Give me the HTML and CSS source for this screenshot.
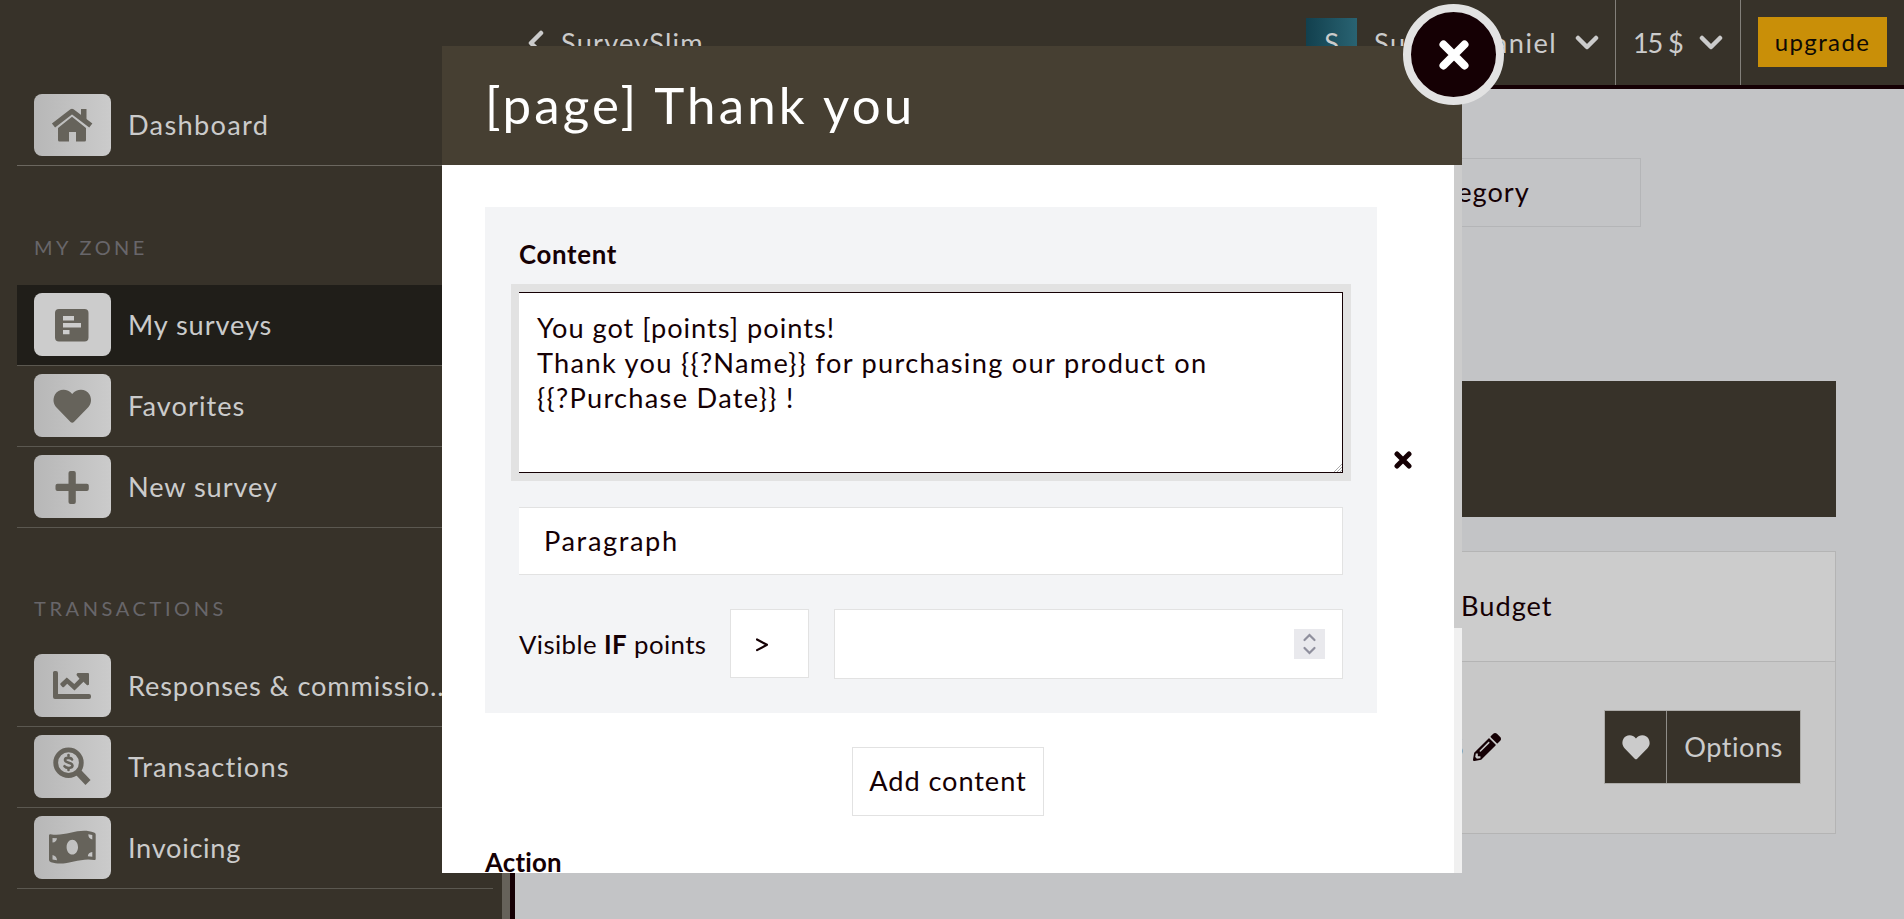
FILE: index.html
```html
<!DOCTYPE html>
<html lang="en">
<head>
<meta charset="utf-8">
<title>SurveySlim</title>
<link rel="stylesheet" href="styles.css">
</head>
<body>
<div class="app">
  <header class="topbar">
    <a class="crumb"><svg class="crumb-arrow" viewBox="0 0 16 26"><path d="M13 3 3 13l10 10"/></svg><span class="t-crumb">SurveySlim</span></a>
    <div class="account">
      <span class="avatar">S</span><span class="t-user">Survey Daniel</span>
      <svg class="chev" viewBox="0 0 24 15"><path d="m3 3 9 9 9-9"/></svg>
    </div>
    <div class="balance"><span class="t-balance">15 $</span><svg class="chev" viewBox="0 0 24 15"><path d="m3 3 9 9 9-9"/></svg></div>
    <div class="upgrade-wrap"><button class="upgrade">upgrade</button></div>
  </header>

  <div class="columns">
    <nav class="sidebar">
      <a class="item"><svg class="tile" viewBox="0 0 77 62"><path class="ln" stroke-width="5.2" stroke-linejoin="round" d="M19.5 31.5 38 17.3l18.8 14.2"/><path d="M47 15h5.5v13L47 24zM38 22.8 52 34v12a1.5 1.5 0 0 1-1.500 1.500H42V38h-7v9.500H25.500A1.500 1.500 0 0 1 24 46V34z"/></svg><span class="t-dash">Dashboard</span></a>
      <h2 class="group">MY ZONE</h2>
      <a class="item active"><svg class="tile" viewBox="0 0 77 63"><path fill-rule="evenodd" d="M25 16h25.500a4 4 0 0 1 4 4v24.500a4 4 0 0 1-4 4H25a4 4 0 0 1-4-4V20a4 4 0 0 1 4-4zM29 23v4.500h11V23zM29 30v4.500h18V30zM29 37v4.300h6.500V37z"/></svg><span class="t-surveys">My surveys</span></a>
      <a class="item"><svg class="tile" viewBox="0 0 77 63"><path d="M38.200 20C33 13.500 24 15 21 20.500c-2.600 5-1.600 9.500 1.500 13L36.500 48q1.700 1.500 3.400 0L54 33.500c3.200-3.500 4.100-8 1.500-13C52.500 15 43.500 13.500 38.200 20z"/></svg><span class="t-fav">Favorites</span></a>
      <a class="item"><svg class="tile" viewBox="0 0 77 63"><rect x="34.500" y="16" width="7.300" height="33" rx="2"/><rect x="21.500" y="28.800" width="33.300" height="7.300" rx="2"/></svg><span class="t-new">New survey</span></a>
      <h2 class="group group-2">TRANSACTIONS</h2>
      <a class="item"><svg class="tile" viewBox="0 0 77 63"><path d="M20.500 17H22q2 0 2 2v21h31q2 0 2 2v1q0 2-2 2H21q-2 0-2-2V18.500q0-1.500 1.500-1.500zM43.500 19H54q1 0 1 1v10.500q-1 1.500-2.500.2l-3-3-9 8.800-7.300-6.800-3.200 3.200q-.8.800-1.600 0l-1.800-1.900q-.8-1 0-1.800l6.200-5.800 7.500 6.500 5.200-5.200-2.700-3.200q-.9-1.500.7-2.500z"/></svg><span class="t-resp">Responses &amp; commissio...</span></a>
      <a class="item"><svg class="tile" viewBox="0 0 77 63"><circle class="ln" cx="34.500" cy="27.700" r="12.800" stroke-width="4.800"/><path class="ln" stroke-width="7" stroke-linejoin="round" d="m44.500 37.500 9.500 10"/><path class="ln" stroke-width="2.600" stroke-linecap="round" d="M38 24.500c-1-2-7-2.500-7 .5 0 3.400 7.500 2 7.500 5.600 0 3.200-6.500 2.800-8 .6M34.500 21v-1M34.500 35v-1"/></svg><span class="t-trans">Transactions</span></a>
      <a class="item"><svg class="tile" viewBox="0 0 77 63"><path fill-rule="evenodd" d="M15 19.500q0-1.500 1.500-1.300C32 21 45 11 60 16.500q1.700.7 1.700 2V43q0 1.300-1.500 1C45 41 32 51 17 46.200q-2-.8-2-2.200zM38.300 23.800c-3.300 0-5.700 3.400-5.700 7.400s2.400 7.400 5.700 7.400 5.700-3.400 5.700-7.400-2.400-7.400-5.700-7.400zM18.500 22v4.500q4-.3 4.500-4.300zM18.500 39v4.500l4.500.8q-.3-4.500-4.500-5.300zM58.300 23.500v-4.500l-4-.7q0 4.200 4 5.200zM58.300 36v4.700l-4.500-.5q.4-3.800 4.500-4.200z"/></svg><span class="t-inv">Invoicing</span></a>
    </nav>
    <div class="side-scroll"></div>

    <main class="main">
      <div class="filters"><div class="category"><span class="t-cat">Category</span></div></div>
      <div class="banner"></div>
      <section class="table">
        <div class="thead"><span class="t-budget">Budget</span></div>
        <div class="trow">
          <span class="amount">$</span>
          <svg class="pencil" viewBox="0 0 512 512"><path d="M497.900 142.100l-46.100 46.100c-4.700 4.700-12.300 4.700-17 0l-111-111c-4.700-4.700-4.700-12.300 0-17l46.100-46.100c18.700-18.700 49.100-18.700 67.900 0l60.100 60.100c18.800 18.700 18.800 49.100 0 67.900zM284.200 99.800L21.600 362.400.4 483.900c-2.900 16.400 11.400 30.600 27.800 27.800l121.500-21.300 262.600-262.600c4.700-4.700 4.700-12.300 0-17l-111-111c-4.800-4.700-12.400-4.700-17.100 0zM124.100 339.900c-5.500-5.500-5.500-14.300 0-19.800l154-154c5.500-5.500 14.300-5.500 19.800 0s5.500 14.300 0 19.800l-154 154c-5.500 5.500-14.300 5.500-19.800 0zM88 424h48v36.300l-64.500 11.300-31.100-31.100L51.700 376H88v48z"/></svg>
          <div class="actions">
            <span class="fav"><svg viewBox="19 15.500 38.500 34"><path d="M38.200 20C33 13.500 24 15 21 20.500c-2.600 5-1.600 9.500 1.500 13L36.500 48q1.700 1.500 3.400 0L54 33.500c3.200-3.500 4.100-8 1.500-13C52.500 15 43.500 13.500 38.200 20z"/></svg></span>
            <span class="options"><span class="t-options">Options</span></span>
          </div>
        </div>
      </section>
    </main>
  </div>
</div>

<div class="modal">
  <div class="modal-head"><h1>[page] Thank you</h1></div>
  <div class="modal-body">
    <div class="scroll-area">
      <div class="block-row">
        <section class="block">
          <div class="label">Content</div>
          <div class="textarea"><div class="l1">You got [points] points!</div><div class="l2">Thank you {{?Name}} for purchasing our product on</div><div class="l3">{{?Purchase Date}} !</div>
            <svg class="grip" viewBox="0 0 8 8"><path d="M0 8 8 0M3 8l5-5M6 8l2-2"/></svg></div>
          <div class="select"><span class="t-para">Paragraph</span></div>
          <div class="cond">
            <span class="t-visible">Visible <b>IF</b> points</span>
            <span class="op"><svg viewBox="0 0 12 14"><path d="m1 1.500 10 5.300-10 5.300"/></svg></span>
            <span class="num"><svg class="spin" viewBox="0 0 31 30"><path d="m10.500 11 5-5 5 5M10.500 19l5 5 5-5"/></svg></span>
          </div>
        </section>
        <svg class="remove" viewBox="0 0 18 18"><path d="m3 3 12 12M15 3 3 15"/></svg>
      </div>
      <button class="add"><span class="t-add">Add content</span></button>
      <div class="action">Action</div>
    </div>
    <div class="scrollbar"><div class="thumb"></div></div>
  </div>
  <div class="close"><svg viewBox="0 0 30 30"><path d="m4.500 4.500 21 21M25.500 4.500l-21 21"/></svg></div>
</div>
</body>
</html>
```
FILE: styles.css
```css
* { box-sizing: border-box; }
body {
  margin: 0;
  width: 1904px;
  height: 919px;
  overflow: hidden;
  font-family: Lato, "Open Sans", sans-serif;
  font-size: 27.2px;
  line-height: 35.2px;
  font-variant-ligatures: none;
  letter-spacing: 1px;
  color: #150004;
  background: #c3c4c6;
}
span, div, h1, h2 { white-space: nowrap; }
h1, h2 { margin: 0; font-weight: 400; }
button { font: inherit; letter-spacing: inherit; color: inherit; border: 0; padding: 0; }
svg { display: block; flex: none; }

.app { display: flex; flex-direction: column; height: 919px; }

.topbar {
  display: flex;
  flex: none;
  height: 85px;
  background: #373229;
  color: #cbcbcb;
}
.crumb { display: flex; align-items: center; gap: 17px; padding-left: 528px; flex: 1; }
.t-crumb { letter-spacing: 1.2px; }
.crumb-arrow { width: 16px; height: 26px; }
.crumb-arrow path, .chev path { fill: none; stroke: #cbcbcb; stroke-width: 4.5; stroke-linecap: round; stroke-linejoin: round; }
.chev { width: 24px; height: 15px; }
.account { display: flex; align-items: center; width: 309px; }
.avatar {
  display: flex;
  align-items: center;
  justify-content: center;
  width: 51px;
  height: 50px;
  margin-right: 17px;
  letter-spacing: 0;
  background: linear-gradient(90deg, #12404e, #296372);
}
.t-user { width: 201px; letter-spacing: 1.5px; }
.balance {
  display: flex;
  align-items: center;
  justify-content: space-between;
  width: 126px;
  padding: 0 17px;
  border-left: 1px solid #83807a;
  border-right: 1px solid #83807a;
}
.t-balance { letter-spacing: -1.200px; }
.upgrade-wrap { padding: 17px 17px 0; }
.upgrade { width: 129px; height: 50px; background: #c98f08; font-size: 24px; letter-spacing: 1.400px; color: #0e0a05; }

.columns { display: flex; flex: 1; min-height: 0; }
.sidebar { width: 502px; background: #373229; padding: 4px 0 0 17px; color: #cbcbcb; overflow: hidden; }
.side-scroll { width: 13px; background: #66625a; border-right: 5px solid #150004; }
.item {
  display: flex;
  align-items: center;
  gap: 17px;
  width: 476px;
  height: 81px;
  padding: 0 0 1px 17px;
  border-bottom: 1px solid #5b5850;
}
.item:first-child { height: 77px; padding-bottom: 4px; border-color: #6b675f; }
.item.active { background: #201e19; }
.tile {
  width: 77px;
  height: 63px;
  border-radius: 8px;
  background: linear-gradient(90deg, #b7b7b7, #cbcbcb);
  fill: #66635b;
}
.item:first-child .tile { height: 62px; }
.active .tile { background: #cccccc; }
.tile .ln { fill: none; stroke: #66635b; }
.t-dash { letter-spacing: 1.300px; }
.t-surveys, .t-new { letter-spacing: .9px; }
.t-fav { letter-spacing: 1.050px; }
.t-resp { letter-spacing: .85px; }
.t-trans { letter-spacing: 1.100px; }
.t-inv { letter-spacing: .7px; }
.group {
  height: 119px;
  padding: 64px 0 0 17px;
  font-size: 20px;
  line-height: 35px;
  letter-spacing: 3.400px;
  color: #68666a;
}
.group-2 { height: 118px; padding-top: 63px; letter-spacing: 3.600px; }

.main { flex: 1; padding: 69px 68px 0 45px; border-top: 4px solid #150004; }
.filters { display: flex; justify-content: flex-end; padding-right: 195px; }
.category { width: 260px; height: 69px; padding: 15px 0 0 31px; border: 1px solid #b4b5b7; }
.banner { height: 136px; margin-top: 154px; background: #373229; }
.table { height: 283px; margin-top: 34px; border: 1px solid #b4b4b4; background: #c8c8c8; }
.thead { height: 110px; padding: 36px 0 0 900px; background: #cccccc; border-bottom: 1px solid #b4b4b4; }
.trow { display: flex; align-items: center; height: 170px; padding-left: 887px; }
.amount { width: 17px; color: #66635b; }
.pencil { width: 28px; height: 28px; margin-left: 8px; fill: #150004; }
.actions {
  display: flex;
  width: 197px;
  height: 74px;
  margin-left: 103px;
  border: 1px solid #acaba8;
  background: #373229;
  color: #cbcbcb;
}
.fav { display: flex; align-items: center; justify-content: center; width: 62px; border-right: 1px solid #8f8d88; }
.fav svg { width: 28px; height: 25px; fill: #cbcbcb; }
.options { display: flex; align-items: center; justify-content: center; flex: 1; }
.t-options { letter-spacing: .500px; }

.modal { position: absolute; left: 442px; top: 46px; width: 1020px; height: 827px; }
.modal-head { height: 119px; padding: 28px 0 0 43px; background: #463f32; color: #fff; }
.modal-head h1 { font-size: 51px; line-height: 62px; letter-spacing: 3.200px; }
.modal-body { display: flex; height: 708px; background: #fff; overflow: hidden; }
.scroll-area { width: 1012px; padding: 42px 0 0 43px; }
.scrollbar { width: 8px; background: #f0f0f0; }
.thumb { height: 463px; background: #cccccc; }
.block-row { display: flex; align-items: center; }
.block { width: 892px; height: 506px; padding: 30px 34px 0; background: #f3f4f6; }
.label { height: 55px; font-size: 25.800px; font-weight: 700; letter-spacing: .7px; }
.textarea {
  position: relative;
  height: 181px;
  padding: 17px 18px 0;
  background: #fff;
  border: 1px solid #150004;
  border-left: 0;
  outline: 8px solid #e2e2e2;
}
.l2, .l3 { letter-spacing: 1.300px; }
.grip { position: absolute; right: 0; bottom: 0; width: 8px; height: 8px; }
.grip path { stroke: #aaa; stroke-width: 1; }
.select { height: 68px; margin-top: 34px; padding: 15px 25px; background: #fff; border: 1px solid #e2e2e2; border-left: 0; }
.t-para { letter-spacing: 1.600px; }
.cond { display: flex; margin-top: 34px; }
.t-visible { width: 211px; padding-top: 18px; font-size: 25.800px; letter-spacing: .4px; }
.op { width: 79px; height: 69px; padding: 28px 0 0 25px; background: #fff; border: 1px solid #e2e2e2; }
.op svg { width: 12px; height: 14px; }
.op path { fill: none; stroke: #150004; stroke-width: 2.200; stroke-linecap: round; stroke-linejoin: round; }
.num { display: flex; justify-content: flex-end; width: 509px; height: 70px; margin-left: 25px; padding: 19px 17px 0; background: #fff; border: 1px solid #e2e2e2; }
.spin { width: 31px; height: 30px; background: #e9e9ed; }
.spin path { fill: none; stroke: #8f8f9d; stroke-width: 2.200; stroke-linecap: round; }
.remove { width: 18px; height: 18px; margin-left: 17px; }
.remove path { stroke: #150004; stroke-width: 5; stroke-linecap: round; }
.add { display: block; width: 192px; height: 69px; margin: 34px 0 0 367px; padding-bottom: 2px; background: #fff; border: 1px solid #e2e2e2; }
.t-add { letter-spacing: .9px; }
.action { margin-top: 29px; font-size: 25.800px; font-weight: 700; letter-spacing: .2px; }
.close {
  position: absolute;
  left: 961px;
  top: -42px;
  display: flex;
  align-items: center;
  justify-content: center;
  width: 101px;
  height: 101px;
  border: 8px solid #e2e2e2;
  border-radius: 50%;
  background: #150004;
}
.close svg { width: 30px; height: 30px; }
.close path { stroke: #fff; stroke-width: 8; stroke-linecap: round; }
```
